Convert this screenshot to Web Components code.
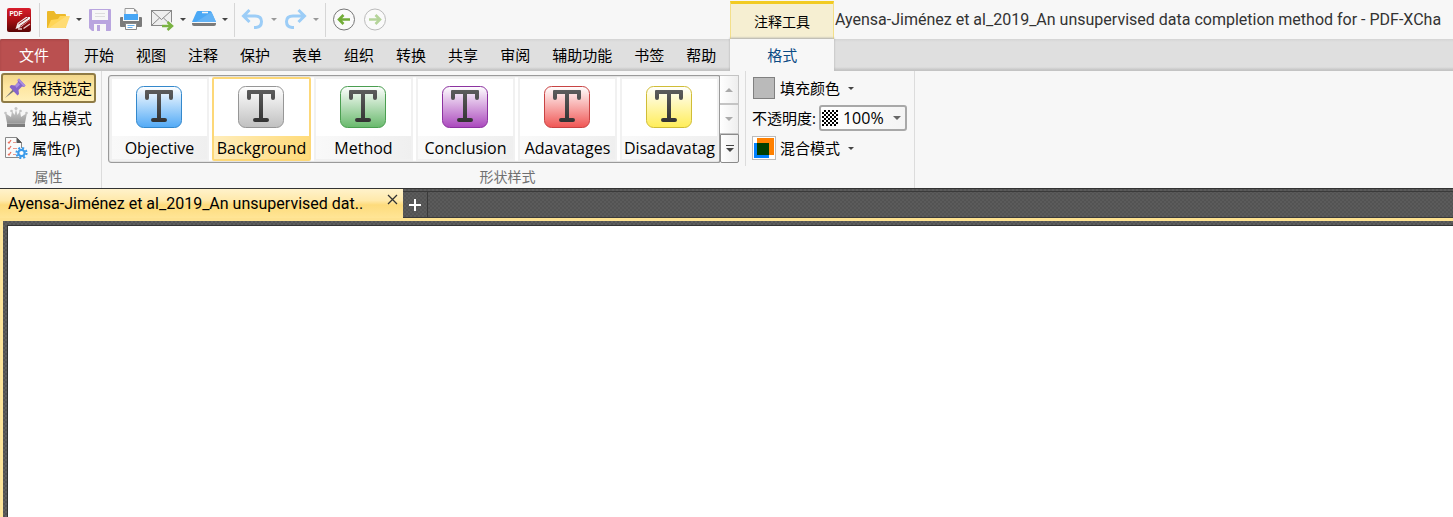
<!DOCTYPE html>
<html lang="zh-CN">
<head>
<meta charset="utf-8">
<title>PDF Editor</title>
<style>
html,body{height:100%}
body{margin:0;background:#f7f7f7;color:#000;font:15px/20px "Open Sans","Noto Sans CJK SC",sans-serif;overflow:hidden}
</style>
</head>
<body>
<app-window></app-window>

<template id="t-window">
<style>
:host{display:flex;flex-direction:column;height:100vh;overflow:hidden}
header{display:flex;height:39px;flex:none}
</style>
<header>
  <quick-access></quick-access>
  <window-title></window-title>
</header>
<ribbon-tabs></ribbon-tabs>
<ribbon-panel></ribbon-panel>
<document-tabs></document-tabs>
<document-view></document-view>
</template>

<template id="t-quick">
<style>
:host{display:flex;align-items:center;width:730px;flex:none;box-sizing:border-box;padding-left:7px}
button{all:unset;display:flex;align-items:center;height:24px}
button.single{width:24px;margin-right:7px}
button.app{margin-right:8px}
button.split::after{content:"";width:0;margin:0 6px;border:3px solid transparent;border-top-color:#444;border-bottom:0}
button.off::after{border-top-color:#999}
svg{width:24px;height:24px;display:block;flex:none}
i{width:1px;height:34px;background:#d6d6d6;margin-right:6px}
</style>
<button class="single app" aria-label="PDF"><svg viewBox="0 0 24 24"><defs><linearGradient id="r" x2="0" y2="1"><stop stop-color="#d81e2c"/><stop offset=".5" stop-color="#a80f14"/><stop offset="1" stop-color="#5a0505"/></linearGradient></defs><rect width="24" height="24" rx="2" fill="url(#r)"/><text x="2.500" y="8" font-family="Liberation Sans,sans-serif" font-size="6.500" font-weight="bold" fill="#fff">PDF</text><path d="M8.500 21l2-6 8.500-6 4 0v3l-9 7z" fill="#f1eeee"/><path d="M11.500 16l9.500-6.500M13 18.500l10-7" stroke="#981414" stroke-width=".9"/><path d="M16.500 20.500l6.500-4.500M11 21h4" stroke="#e9caca" stroke-width="1.400"/></svg></button>
<i></i>
<button class="split" aria-label="打开"><svg viewBox="0 0 24 24"><path d="M1 20V4q0-1 1-1h6l2 3h9q1 0 1 1v13z" fill="#ecb92a"/><path d="M1.500 20L5 12l7-1 2-3h9.500q.5 0 .3.600L20 19.300q-.3.700-1 .700z" fill="#ffd557"/><path d="M3 20L20.500 8h3q.5 0 .3.600L20 19.300q-.3.700-1 .700z" fill="#fff" opacity=".18"/></svg></button>
<button class="single" aria-label="保存"><svg viewBox="0 0 24 24"><path d="M2 1h20q1 0 1 1v20q0 1-1 1H4l-3-3V2q0-1 1-1z" fill="#b9a5df"/><path d="M4 2h16v10H4zM6 16h12v7H6z" fill="#f7f7f7"/><path d="M7 5.500h10M7 8.500h10" stroke="#ddd"/><path d="M9 17h3v6H9z" fill="#b9a5df"/></svg></button>
<button class="single" aria-label="打印"><svg viewBox="0 0 24 24"><path d="M1 10q0-1 1-1h20q1 0 1 1v8q0 1-1 1H2q-1 0-1-1z" fill="#7b7b7b"/><path d="M4 9h16v4H4z" fill="#f7f7f7"/><path d="M6 .5h9l3 3V7H6z" fill="#fafafa" stroke="#999"/><path d="M15 .5v3h3z" fill="#888"/><path d="M5 6h14v6H5z" fill="#47a6f5"/><path d="M6.500 15.500h11v6h-11z" fill="#fff" stroke="#888"/><path d="M8.500 17.500h7M8.500 19.500h5" stroke="#68b0ec"/></svg></button>
<button class="split" aria-label="发送邮件"><svg viewBox="0 0 24 24"><rect x="1.500" y="2.500" width="20" height="15" fill="#eee" stroke="#888"/><path d="M2 3l9.500 8.500L21 3M2 17l7.500-7M21 17l-7.500-7" fill="none" stroke="#888"/><path d="M12 18h9M17.500 14l4.500 4-4.500 4" fill="none" stroke="#f7f7f7" stroke-width="5"/><path d="M12 18h9M17.500 14l4.500 4-4.500 4" fill="none" stroke="#7ab342" stroke-width="2.500"/></svg></button>
<button class="split" aria-label="扫描"><svg viewBox="0 0 24 24"><path d="M6 3h12q1 0 1.500 1L24 14H0L4.500 4Q5 3 6 3z" fill="#4aa8f5"/><path d="M4 14L19.500 4 24 14z" fill="#63b3f6"/><path d="M10 4.500h6" stroke="#f7f7f7" stroke-width="1.500"/><path d="M0 15h24v1q0 2-2 2H2q-2 0-2-2z" fill="#7a7a7a"/></svg></button>
<i></i>
<button class="split off" aria-label="撤销"><svg viewBox="0 0 24 24"><path d="M8.500 2l-6 6 6 6M3 8h11q6.500 0 6.500 5.500T15 19.500h-2" fill="none" stroke="#9ccdf7" stroke-width="3"/></svg></button>
<button class="split off" aria-label="重做"><svg viewBox="0 0 24 24"><path d="M15.500 2l6 6-6 6M21 8H10q-6.500 0-6.500 5.500T9 19.500h2" fill="none" stroke="#9ccdf7" stroke-width="3"/></svg></button>
<i></i>
<button class="single" aria-label="后退"><svg viewBox="0 0 24 24"><circle cx="12" cy="11.500" r="10.500" fill="#fafafa" stroke="#777"/><path d="M18 11.500H7M11.500 7L7 11.500l4.500 4.500" fill="none" stroke="#72ac38" stroke-width="2.600"/></svg></button>
<button class="single" aria-label="前进"><svg viewBox="0 0 24 24"><circle cx="12" cy="11.500" r="10.500" fill="#fafafa" stroke="#bbb"/><path d="M6 11.500h11M12.500 7l4.500 4.500-4.500 4.500" fill="none" stroke="#b5d49a" stroke-width="2.600"/></svg></button>
</template>

<template id="t-title">
<style>
:host{display:flex;flex:1;min-width:0}
.context{box-sizing:border-box;width:104px;flex:none;margin-top:1px;border:1px solid #f3df8a;border-top:3px solid #f2cb22;border-bottom:0;background:#f6efd2;text-align:center;font-size:14px;line-height:36px}
.name{font-family:Roboto,sans-serif;font-size:16px;line-height:39px;color:#333;white-space:nowrap;overflow:hidden;padding-left:1px}
</style>
<div class="context">注释工具</div>
<div class="name">Ayensa-Jiménez et al_2019_An unsupervised data completion method for - PDF-XCha</div>
</template>

<template id="t-tabs">
<style>
:host{display:flex;flex:none;height:32px;box-sizing:border-box;background:linear-gradient(#d4d4d4,#dfdfdf 3px,#dfdfdf 28px,#c4c4c4 31px)}
button{all:unset;box-sizing:border-box;padding:0 11px;line-height:33px;white-space:nowrap}
.file{width:69px;margin-right:4px;text-align:center;padding:0 1px 0 0;background:#ba5050;color:#fff;border-radius:2px 2px 0 0;box-shadow:inset 0 1px 2px #a04040}
.active{width:104px;margin-left:3px;text-align:center;background:#f7f7f7;color:#0b4b85;box-shadow:0 -1px 2px #aaa}
nav{display:flex}
</style>
<nav>
<button class="file">文件</button><button>开始</button><button>视图</button><button>注释</button><button>保护</button><button>表单</button><button>组织</button><button>转换</button><button>共享</button><button>审阅</button><button>辅助功能</button><button>书签</button><button>帮助</button><button class="active">格式</button>
</nav>
</template>

<template id="t-panel">
<style>
:host{display:flex;flex:none;height:117px;background:#f7f7f7}
command-button{height:30px}
.gallery{display:flex;height:88px}
.tiles{display:flex;gap:3px;box-sizing:border-box;width:612px;padding:0 0 0 1px;border:1px solid #9a9a9a;border-radius:3px 0 0 3px;box-shadow:inset 0 0 2px #999;background:#fff;align-items:center}
.scroll{display:flex;flex-direction:column;width:19px}
.scroll button{all:unset;box-sizing:border-box;flex:1;border:1px solid #c4c4c4;border-left:0;background:linear-gradient(90deg,#fff,#eee);display:flex;align-items:center;justify-content:center}
.scroll button:last-child{border:1px solid #8a8a8a;border-radius:0 0 2px 2px}
.options{display:flex;flex-direction:column;gap:4px}
.row{display:flex;align-items:center;height:26px}
.row button{all:unset;display:flex;align-items:center;gap:4px}
.row button::after{content:"";margin-left:4px;border:3px solid transparent;border-top-color:#444;border-bottom:0}
.swatch{box-sizing:border-box;width:22px;height:22px;margin:0 1px;background:#bababa;border:1px solid #808080}
.combo{position:relative;display:flex;align-items:center;box-sizing:border-box;width:88px;height:26px;margin-left:3px;padding-left:1px;border:2px solid #a8a8a8;border-radius:3px;background:linear-gradient(90deg,#fff,#f4f4f4)}
.combo::after{content:"";position:absolute;right:4px;top:9px;border:4px solid transparent;border-top-color:#666;border-bottom:0;pointer-events:none}
.checker{flex:none;width:16px;height:16px;background:repeating-conic-gradient(#000 0 25%,#fff 0 50%) 0 0/4px 4px}
select{appearance:none;border:0;background:none;padding:0 0 0 5px;margin:0;width:66px;font:inherit;font-size:16px;line-height:20px;height:22px;color:#000;outline:0}
</style>
<ribbon-group label="属性" class="g1">
  <command-button pressed>
    <svg slot="icon" viewBox="0 0 24 24"><path d="M1 22L11 11l2 2z" fill="#777"/><path d="M15 2.500l6.500 7-1.500 1.500-2-.5-3.500 3.500.5 4-1.500 1.500-8-8.500L7 9l4 .5 3-3.500-.5-2z" fill="#8565c8"/><path d="M15 2.500l6.500 7-1.500 1.500-6.500-7z" fill="#a98ee0"/><path d="M11 9.500l3-3 2 2-3.500 3.500z" fill="#a98ee0"/></svg>保持选定</command-button>
  <command-button>
    <svg slot="icon" viewBox="0 0 24 24"><defs><linearGradient id="c" x2="0" y2="1"><stop stop-color="#d0d0d0"/><stop offset="1" stop-color="#999"/></linearGradient></defs><path d="M3 17L1 7l6 4 1-6 2.500 4L12 3l1.500 6L16 5l1 6 6-4-2 10z" fill="url(#c)"/><path d="M3 17h18v4H3z" fill="#7c7c7c"/><path d="M3 17.500h18" stroke="#aaa"/><g fill="#c4c4c4"><circle cx="1.500" cy="7" r="1.300"/><circle cx="7.500" cy="5" r="1.300"/><circle cx="12" cy="2.500" r="1.500"/><circle cx="16.500" cy="5" r="1.300"/><circle cx="22.500" cy="7" r="1.300"/></g></svg>独占模式</command-button>
  <command-button>
    <svg slot="icon" viewBox="0 0 24 24"><path d="M1.500 1.500h11l5 5v15h-16z" fill="#fafafa" stroke="#888"/><path d="M12.500 1v6H18z" fill="#555"/><path d="M4 6l1 1 2-3M4 12l1 1 2-3M4 18l1 1 2-3" fill="none" stroke="#e8705f" stroke-width="1.300"/><path d="M9 6.500h3M9 12.500h4M9 18.500h3" stroke="#e99b90"/><circle cx="17.500" cy="17" r="5" fill="#fff"/><circle cx="17.500" cy="17" r="3.200" fill="none" stroke="#3c9bea" stroke-width="2.200"/><circle cx="17.500" cy="17" r="5" fill="none" stroke="#3c9bea" stroke-width="2.200" stroke-dasharray="2 1.930"/></svg>属性(P)</command-button>
</ribbon-group>
<ribbon-group label="形状样式" class="g2">
  <div class="gallery">
    <div class="tiles">
      <style-tile border="#3388cc" fill="#52aaf6">Objective</style-tile>
      <style-tile border="#969696" fill="#c0c0c0" selected>Background</style-tile>
      <style-tile border="#4a9e50" fill="#68b96c">Method</style-tile>
      <style-tile border="#8c32a0" fill="#aa48bd">Conclusion</style-tile>
      <style-tile border="#c84343" fill="#f05654">Adavatages</style-tile>
      <style-tile border="#d0bd36" fill="#ffed58">Disadavatag</style-tile>
    </div>
    <div class="scroll">
      <button aria-label="向上"><svg width="8" height="4"><path d="M0 4l4-4 4 4z" fill="#aaa"/></svg></button>
      <button aria-label="向下"><svg width="8" height="4"><path d="M0 0h8L4 4z" fill="#aaa"/></svg></button>
      <button aria-label="更多"><svg width="8" height="7"><path d="M0 0h8v1H0zM0 3h8L4 7z" fill="#444"/></svg></button>
    </div>
  </div>
</ribbon-group>
<ribbon-group label="" class="g3">
  <div class="options">
    <div class="row"><button><span class="swatch"></span>填充颜色</button></div>
    <div class="row"><label for="opacity">不透明度:</label><div class="combo"><span class="checker"></span><select id="opacity"><option>100%</option></select></div></div>
    <div class="row"><button><svg width="24" height="24"><rect x=".5" y=".5" width="23" height="23" fill="#fff" stroke="#bbb"/><path d="M5 2h17v17H5z" fill="#ff8000"/><path d="M2 7h15v15H2z" fill="#0080ff"/><path d="M5 7h12v12H5z" fill="#004000"/></svg>混合模式</button></div>
  </div>
</ribbon-group>
</template>

<template id="t-group">
<style>
:host{display:flex;flex-direction:column;box-sizing:border-box;border-right:1px solid #dcdcdc;flex:none}
:host(.g1){width:102px}
:host(.g2){width:644px;border-image:linear-gradient(#dcdcdc 94px,#f7f7f7 94px) 1}
:host(.g3){width:169px}
.body{height:94px;box-sizing:border-box}
:host(.g1) .body{padding:2px 0 0 1px}
:host(.g2) .body{padding:4px 0 0 6px}
:host(.g3) .body{padding:4px 0 0 6px}
.label{text-align:center;font-size:14px;line-height:24px;height:23px;color:#707070}
:host(.g1) .label{padding-right:4px}
:host(.g2) .label{padding-right:32px;padding-left:200px}
</style>
<div class="body"><slot></slot></div>
<div class="label"></div>
</template>

<template id="t-command">
<style>
:host{display:block;width:95px}
button{all:unset;box-sizing:border-box;display:flex;align-items:center;gap:4px;width:95px;height:30px;padding-left:3px;white-space:nowrap}
:host([pressed]) button{border:2px solid #8f7b45;border-radius:3px;padding-left:1px;background:linear-gradient(#f1d68b,#fde59e 40%,#ffefb8)}
::slotted(svg){width:24px;height:24px;flex:none}
</style>
<button><slot name="icon"></slot><span><slot></slot></span></button>
</template>

<template id="t-tile">
<style>
:host{display:block;width:99px;height:84px;flex:none}
button{all:unset;box-sizing:border-box;display:flex;flex-direction:column;width:99px;height:84px;border:2px solid #f1f1f1;background:#fff;overflow:hidden}
.pic{display:flex;height:57px;box-sizing:border-box;padding:7px 0 0 24px}
.cap{height:23px;line-height:24px;font-size:16px;text-align:center;background:linear-gradient(90deg,#f9f9f9,#efefef);white-space:nowrap}
:host([selected]) button{border-color:#fdd878;border-radius:2px}
:host([selected]) .cap{background:linear-gradient(90deg,#ffedbb,#ffdb7a)}
svg{width:46px;height:42px}
</style>
<button>
<span class="pic"><svg viewBox="0 0 46 42"><defs><linearGradient id="g" x2="0" y2="1"><stop stop-color="#fff"/><stop class="end" offset="1"/></linearGradient><linearGradient id="t" x2="0" y2="1"><stop stop-color="#5c5c5c"/><stop offset="1" stop-color="#333"/></linearGradient></defs><rect x=".5" y=".5" width="45" height="41" rx="7" fill="url(#g)"/><path d="M9 5q0-1 1-1h26q1 0 1 1v7q0 2-2 2t-2-2V8h-8v24h4q2 0 2 2t-2 2H17q-2 0-2-2t2-2h4V8h-8v4q0 2-2 2t-2-2z" fill="url(#t)"/></svg></span>
<span class="cap"><slot></slot></span>
</button>
</template>

<template id="t-doctabs">
<style>
:host{display:flex;flex:none;height:33px;box-sizing:border-box;border-top:1px solid #333;border-bottom:3px solid #fee290;background:repeating-conic-gradient(#535353 0 25%,#5b5b5b 0 50%) 0 0/4px 4px}
.tab{display:flex;box-sizing:border-box;width:403px;padding:0 5px 0 8px;background:linear-gradient(#fff2cb,#ffe9aa 40%,#fddb7c 55%,#ffe596);justify-content:space-between;line-height:29px}
button{all:unset}
.close{display:flex;height:21px;align-items:center}
.add{width:25px;margin-top:2px;border:1px solid #3a3a3a;border-left:0;box-sizing:border-box;display:flex;align-items:center;justify-content:center}
.rest{flex:1;margin-top:2px;border-top:1px solid #3a3a3a;border-bottom:1px solid #3a3a3a}
.tab button:first-child{font-family:Roboto,sans-serif;font-size:16px}
</style>
<div class="tab"><button>Ayensa-Jiménez et al_2019_An unsupervised dat..</button><button class="close" aria-label="关闭"><svg width="11" height="11"><path d="M1 1l9 9M10 1L1 10" stroke="#333" stroke-width="1.300"/></svg></button></div>
<button class="add" aria-label="新建"><svg width="12" height="12"><path d="M6 0v12M0 6h12" stroke="#fff" stroke-width="2"/></svg></button>
<div class="rest"></div>
</template>

<template id="t-view">
<style>
:host{display:flex;flex:1;box-sizing:border-box;padding-left:3px;background:#ffe69b}
.frame{flex:1;display:flex;padding:4px 0 0 4px;background:repeating-conic-gradient(#535353 0 25%,#5e5e5e 0 50%) 0 0/4px 4px}
.page{flex:1;background:#fff;border-top:1px solid #333;border-left:1px solid #333}
</style>
<div class="frame"><div class="page"></div></div>
</template>

<script>
class Base extends HTMLElement{
  constructor(){
    super();
    this.attachShadow({mode:"open"}).append(document.getElementById(this.constructor.source).content.cloneNode(true));
  }
}
const simple=(name,id)=>customElements.define(name,class extends Base{static source=id});
simple("quick-access","t-quick");
simple("window-title","t-title");
simple("ribbon-tabs","t-tabs");
simple("command-button","t-command");
customElements.define("ribbon-group",class extends Base{
  static source="t-group";
  connectedCallback(){this.shadowRoot.querySelector(".label").textContent=this.getAttribute("label")}
});
customElements.define("style-tile",class extends Base{
  static source="t-tile";
  connectedCallback(){
    this.shadowRoot.querySelector("rect").setAttribute("stroke",this.getAttribute("border"));
    this.shadowRoot.querySelector(".end").setAttribute("stop-color",this.getAttribute("fill"));
  }
});
simple("ribbon-panel","t-panel");
simple("document-tabs","t-doctabs");
simple("document-view","t-view");
simple("app-window","t-window");
</script>
</body>
</html>
